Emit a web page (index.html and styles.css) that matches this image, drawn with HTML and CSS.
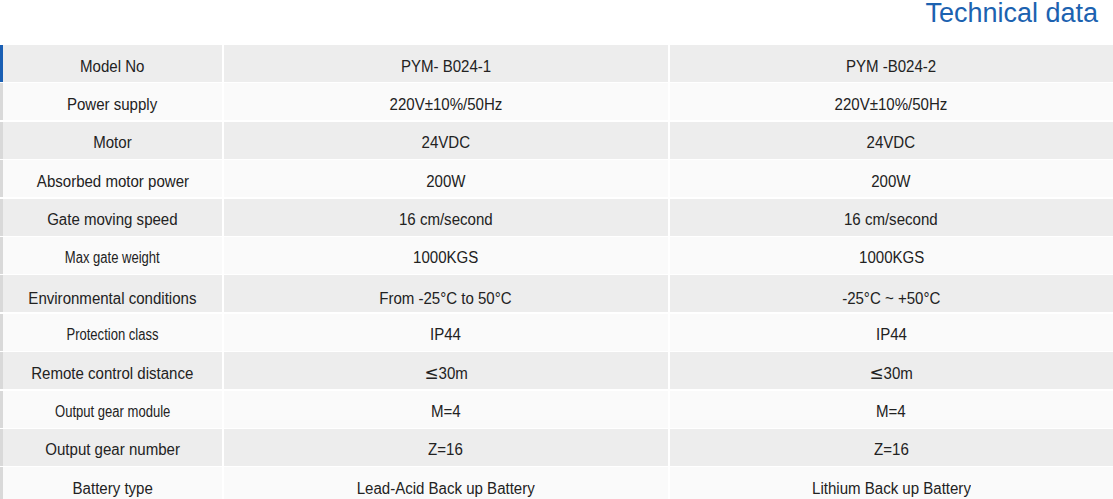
FILE: index.html
```html
<!DOCTYPE html>
<html lang="en">
<head>
<meta charset="utf-8">
<title>Technical data</title>
<link rel="stylesheet" href="styles.css">
</head>
<body>
<div class="page">
  <h2 class="title">Technical data</h2>
  <div class="spec">
    <div class="row head"><div class="cell label"><span class="txt">Model No</span></div><div class="cell"><span class="txt">PYM- B024-1</span></div><div class="cell"><span class="txt">PYM -B024-2</span></div></div>
    <div class="row"><div class="cell label"><span class="txt">Power supply</span></div><div class="cell"><span class="txt">220V±10%/50Hz</span></div><div class="cell"><span class="txt">220V±10%/50Hz</span></div></div>
    <div class="row"><div class="cell label"><span class="txt">Motor</span></div><div class="cell"><span class="txt">24VDC</span></div><div class="cell"><span class="txt">24VDC</span></div></div>
    <div class="row"><div class="cell label"><span class="txt">Absorbed motor power</span></div><div class="cell"><span class="txt">200W</span></div><div class="cell"><span class="txt">200W</span></div></div>
    <div class="row"><div class="cell label"><span class="txt">Gate moving speed</span></div><div class="cell"><span class="txt">16 cm/second</span></div><div class="cell"><span class="txt">16 cm/second</span></div></div>
    <div class="row"><div class="cell label"><span class="txt narrow">Max gate weight</span></div><div class="cell"><span class="txt">1000KGS</span></div><div class="cell"><span class="txt">1000KGS</span></div></div>
    <div class="row low"><div class="cell label"><span class="txt">Environmental conditions</span></div><div class="cell"><span class="txt">From -25°C to 50°C</span></div><div class="cell"><span class="txt">-25°C ~ +50°C</span></div></div>
    <div class="row"><div class="cell label"><span class="txt narrow">Protection class</span></div><div class="cell"><span class="txt">IP44</span></div><div class="cell"><span class="txt">IP44</span></div></div>
    <div class="row"><div class="cell label"><span class="txt">Remote control distance</span></div><div class="cell"><span class="txt"><span class="le">≤</span>30m</span></div><div class="cell"><span class="txt"><span class="le">≤</span>30m</span></div></div>
    <div class="row"><div class="cell label"><span class="txt narrow">Output gear module</span></div><div class="cell"><span class="txt">M=4</span></div><div class="cell"><span class="txt">M=4</span></div></div>
    <div class="row"><div class="cell label"><span class="txt">Output gear number</span></div><div class="cell"><span class="txt">Z=16</span></div><div class="cell"><span class="txt">Z=16</span></div></div>
    <div class="row"><div class="cell label"><span class="txt">Battery type</span></div><div class="cell"><span class="txt">Lead-Acid Back up Battery</span></div><div class="cell"><span class="txt">Lithium Back up Battery</span></div></div>
  </div>
</div>
</body>
</html>
```
FILE: styles.css
```css
html, body {
  margin: 0;
  padding: 0;
  background: #ffffff;
}

.page {
  font-family: "Liberation Sans", Arial, sans-serif;
  color: #222222;
}

.title {
  margin: 0;
  padding: 0 15px 18px 0;
  text-align: right;
  font-size: 27px;
  line-height: 27px;
  font-weight: normal;
  color: #1c62b0;
}

.spec {
  display: grid;
  grid-template-columns: 222px 1fr 1fr;
  column-gap: 2px;
  row-gap: 1.4px;
  grid-auto-rows: 37px;
}

.row {
  display: contents;
}

.cell {
  display: flex;
  align-items: center;
  justify-content: center;
  padding-top: 5px;
  box-sizing: border-box;
  font-size: 16px;
  line-height: 17px;
  white-space: nowrap;
  background: #fafafa;
}

.row:nth-child(odd) > .cell {
  background: #ededed;
}

.row.low > .cell {
  padding-top: 9px;
}

.txt {
  display: inline-block;
  transform: scaleX(0.94);
}

.txt.narrow {
  transform: scaleX(0.815);
}

.le {
  font-family: "DejaVu Sans", sans-serif;
  font-size: 18px;
  line-height: 17px;
}

.label {
  border-left: 3px solid #d9d9d9;
}

.head > .label {
  border-left-color: #1a5fb4;
}
```
